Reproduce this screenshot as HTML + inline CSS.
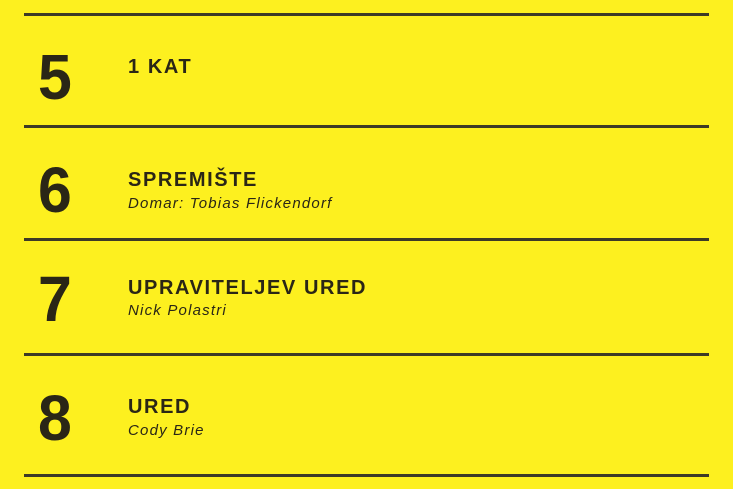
<!DOCTYPE html>
<html><head><style>
body{margin:0;width:733px;height:489px;background:#fdf01f;font-family:"Liberation Sans",sans-serif;color:#2a2616;overflow:hidden;position:relative}
.l{position:absolute;left:24px;width:685px;height:3px;background:#3d3a26}
.n{position:absolute;left:38px;font-size:64px;font-weight:bold;line-height:1;transform:scaleX(0.95);transform-origin:left}
.t{position:absolute;left:128px;font-size:20px;font-weight:bold;letter-spacing:1.6px;line-height:1}
.s{position:absolute;left:128px;font-size:15px;font-style:italic;letter-spacing:1.2px;line-height:1}
</style></head><body>
<div class="l" style="top:13px"></div>
<div class="l" style="top:125px"></div>
<div class="l" style="top:238px"></div>
<div class="l" style="top:353px"></div>
<div class="l" style="top:474px"></div>
<div class="n" style="top:45px">5</div>
<div class="t" style="top:57px">1 KAT</div>
<div class="n" style="top:158px">6</div>
<div class="t" style="top:170px">SPREMIŠTE</div>
<div class="s" style="top:196px">Domar: Tobias Flickendorf</div>
<div class="n" style="top:267px">7</div>
<div class="t" style="top:278px">UPRAVITELJEV URED</div>
<div class="s" style="top:303px">Nick Polastri</div>
<div class="n" style="top:386px">8</div>
<div class="t" style="top:397px">URED</div>
<div class="s" style="top:423px">Cody Brie</div>
</body></html>
